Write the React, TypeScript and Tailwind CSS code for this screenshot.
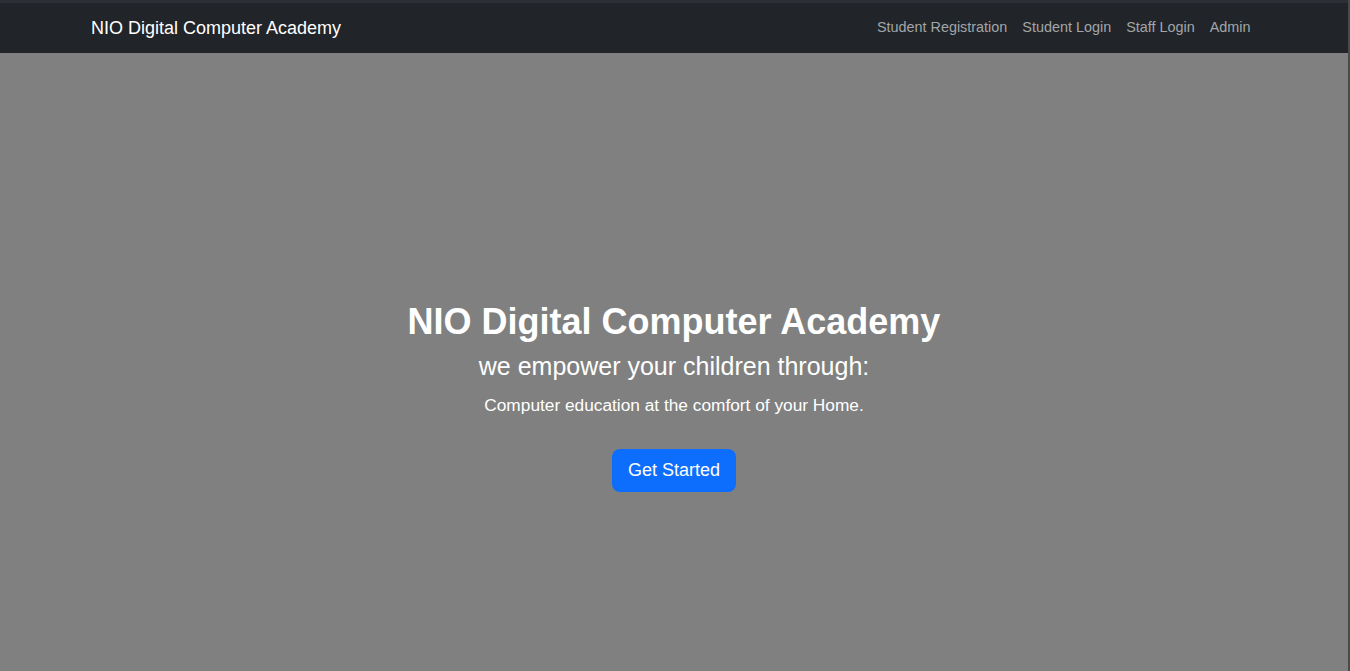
export default function App() {
  const links = ["Student Registration", "Student Login", "Staff Login", "Admin"];
  return (
    <div className="h-screen overflow-hidden bg-[#808080] font-['Liberation_Sans',Arial,sans-serif] border-r-2 border-[#4a4a4a]">
      <nav className="bg-[#212529] border-t-[3px] border-[#2c3036]">
        <div className="flex items-center justify-between h-[50px] pl-[91px] pr-[90px]">
          <a href="#" className="text-white text-[18px]">NIO Digital Computer Academy</a>
          <ul className="flex items-center">
            {links.map((l) => (
              <li key={l}>
                <a href="#" className="block px-[7.5px] text-[14.4px] text-[#a3a5a8]">{l}</a>
              </li>
            ))}
          </ul>
        </div>
      </nav>
      <section className="flex flex-col items-center pt-[247px] text-center text-white">
        <h1 className="text-[36px] font-bold leading-[1.2]">NIO Digital Computer Academy</h1>
        <h4 className="text-[25px] leading-[1.2] mt-[8px]">we empower your children through:</h4>
        <p className="text-[17.3px] leading-[1.5] mt-[12px]">Computer education at the comfort of your Home.</p>
        <a href="#" className="mt-[30px] inline-block bg-[#0d6efd] text-white text-[18px] leading-[27px] rounded-lg px-4 py-2">
          Get Started
        </a>
      </section>
    </div>
  );
}
